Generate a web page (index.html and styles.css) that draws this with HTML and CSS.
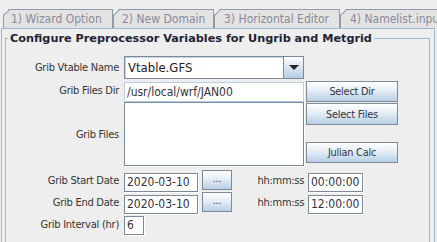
FILE: index.html
```html
<!DOCTYPE html>
<html>
<head>
<meta charset="utf-8">
<link rel="stylesheet" href="styles.css">
</head>
<body>
<div class="win">
  <div class="topstrip"></div>
  <div class="tabs">
    <div class="tab t1">1) Wizard Option</div>
    <div class="tab t2">2) New Domain</div>
    <div class="tab t3">3) Horizontal Editor</div>
    <div class="tab t4">4) Namelist.input</div>
  </div>
  <div class="panel">
    <fieldset class="group">
      <legend>Configure Preprocessor Variables for Ungrib and Metgrid</legend>
      <div class="row r1">
        <label class="lbl">Grib Vtable Name</label>
        <div class="combo">
          <div class="combo-field">Vtable.GFS</div>
          <div class="combo-btn"><svg width="10" height="6" viewBox="0 0 10 6"><path d="M0 0H10L5 5Z" fill="#222"/></svg></div>
        </div>
      </div>
      <div class="row r2">
        <label class="lbl">Grib Files Dir</label>
        <div class="field dir">/usr/local/wrf/JAN00</div>
        <div class="btn wbtn">Select Dir</div>
      </div>
      <div class="row r3">
        <label class="lbl">Grib Files</label>
        <div class="area"></div>
        <div class="btncol">
          <div class="btn wbtn">Select Files</div>
          <div class="btn wbtn">Julian Calc</div>
        </div>
      </div>
      <div class="row r4">
        <label class="lbl">Grib Start Date</label>
        <div class="field date">2020-03-10</div>
        <div class="btn dots">...</div>
        <label class="tlbl">hh:mm:ss</label>
        <div class="field time">00:00:00</div>
      </div>
      <div class="row r5">
        <label class="lbl">Grib End Date</label>
        <div class="field date">2020-03-10</div>
        <div class="btn dots">...</div>
        <label class="tlbl">hh:mm:ss</label>
        <div class="field time">12:00:00</div>
      </div>
      <div class="row r6">
        <label class="lbl">Grib Interval (hr)</label>
        <div class="field intv">6</div>
      </div>
    </fieldset>
  </div>
</div>
</body>
</html>
```

FILE: styles.css
```css
html, body {
  margin: 0;
  padding: 0;
  background: #eeeeee;
}
body {
  width: 437px;
  height: 242px;
  overflow: hidden;
  font-family: "DejaVu Sans Condensed", "DejaVu Sans", sans-serif;
  font-size: 11px;
  color: #333333;
}
.win {
  width: 437px;
  height: 242px;
  overflow: hidden;
}
.topstrip {
  height: 9px;
  background: #eeeeee;
}
.tabs {
  display: flex;
  height: 19px;
  padding-left: 3px;
  white-space: nowrap;
}
.tab {
  position: relative;
  box-sizing: border-box;
  flex: none;
  height: 19px;
  padding: 2px 0 0 8px;
  color: #8a8a99;
  font-size: 12px;
  background: #e3e3e3;
  border-top: 1px solid #8e9bab;
  border-right: 1px solid #8e9bab;
  clip-path: polygon(6px 0, 100% 0, 100% 100%, 0 100%, 0 6px);
}
.tab::before {
  content: "";
  position: absolute;
  left: 0;
  top: -1px;
  width: 1px;
  height: 20px;
  background: #8e9bab;
}
.tab::after {
  content: "";
  position: absolute;
  left: -1px;
  top: 2px;
  width: 9px;
  height: 1px;
  background: #8e9bab;
  transform: rotate(-45deg);
}
.t1 { width: 110px; padding-left: 8px; }
.t2 { width: 101px; padding-left: 9px; }
.t3 { width: 126px; padding-left: 10px; }
.t4 { width: 100px; padding-left: 10px; }
.panel {
  box-sizing: border-box;
  margin-left: 1px;
  width: 434px;
  height: 214px;
  border-top: 1px solid #a3b8cc;
  border-left: 1px solid #a3b8cc;
  border-right: 1px solid #a3b8cc;
  padding: 3px 4px 0 3px;
}
.group {
  box-sizing: border-box;
  margin: 0;
  width: 425px;
  height: 230px;
  border: 1px solid #a3b8cc;
  padding: 5px 0 0 0;
}
.group legend {
  font-family: "DejaVu Sans", sans-serif;
  font-weight: bold;
  font-size: 11.25px;
  color: #222233;
  padding: 0 2px;
  margin-left: 2px;
}
.row {
  display: flex;
  align-items: flex-start;
}
.lbl {
  width: 113px;
  flex: none;
  text-align: right;
  margin-right: 5px;
  font-size: 11px;
  letter-spacing: -0.25px;
}
.r1 { height: 27px; align-items: center; margin-top: 4px; }
.r1 .lbl { margin-top: -1px; }
.combo {
  display: flex;
  width: 180px;
  height: 23px;
  box-sizing: border-box;
  border: 1px solid #7a8a99;
  background: #ffffff;
}
.combo-field {
  flex: 1;
  border-right: 1px solid #7a8a99;
  padding: 3px 0 0 3px;
  font-size: 13px;
  color: #222;
  box-shadow: inset 1px 1px 0 #c8d4e0;
}
.combo-btn {
  width: 19px;
  display: flex;
  align-items: center;
  justify-content: center;
  background: linear-gradient(#ffffff, #dde8f3 40%, #b8cfe5);
}
.field {
  box-sizing: border-box;
  background: #ffffff;
  border: 1px solid #7a8a99;
  box-shadow: 1px 1px 0 #ffffff;
  font-size: 12px;
  color: #333344;
  padding: 1px 0 0 2px;
  white-space: nowrap;
  overflow: hidden;
}
.r2 { height: 21px; margin-top: 0px; }
.r2 .lbl { margin-top: 3px; }
.dir {
  width: 180px;
  height: 20px;
  margin-top: 1px;
  border-color: #b8cfe5;
  padding-top: 2px;
}
.btn {
  box-sizing: border-box;
  border: 1px solid #7a8a99;
  background: linear-gradient(#ffffff, #e4edf6 45%, #b8cfe5);
  font-size: 10.8px;
  letter-spacing: -0.2px;
  color: #333344;
  display: flex;
  align-items: center;
  justify-content: center;
}
.wbtn {
  width: 92px;
  height: 21px;
  margin-left: 2px;
}
.r3 { height: 64px; margin-top: 0px; }
.r3 .lbl { align-self: center; margin-top: 0; }
.area {
  box-sizing: border-box;
  width: 180px;
  height: 64px;
  background: #ffffff;
  border: 1px solid #7a8a99;
  box-shadow: 1px 1px 0 #ffffff;
}
.btncol {
  display: flex;
  flex-direction: column;
  justify-content: space-between;
  height: 60px;
  margin-top: 1px;
}
.btncol .wbtn:first-child { height: 22px; }
.r4 { height: 22px; margin-top: 4px; }
.r5 { height: 22px; margin-top: 0px; }
.r4 .lbl, .r5 .lbl, .r6 .lbl { margin-top: 4px; }
.date {
  width: 74px;
  height: 19px;
  margin-top: 3px;
}
.dots {
  width: 30px;
  height: 20px;
  margin-left: 4px;
  padding-bottom: 4px;
  color: #553366;
}
.tlbl {
  width: 49px;
  flex: none;
  text-align: right;
  margin-left: 23px;
  margin-top: 4px;
  font-size: 11px;
  letter-spacing: -0.3px;
}
.time {
  width: 55px;
  height: 19px;
  margin-top: 3px;
  margin-left: 4px;
}
.r6 { height: 22px; }
.intv {
  width: 20px;
  height: 19px;
  margin-top: 2px;
}
```
